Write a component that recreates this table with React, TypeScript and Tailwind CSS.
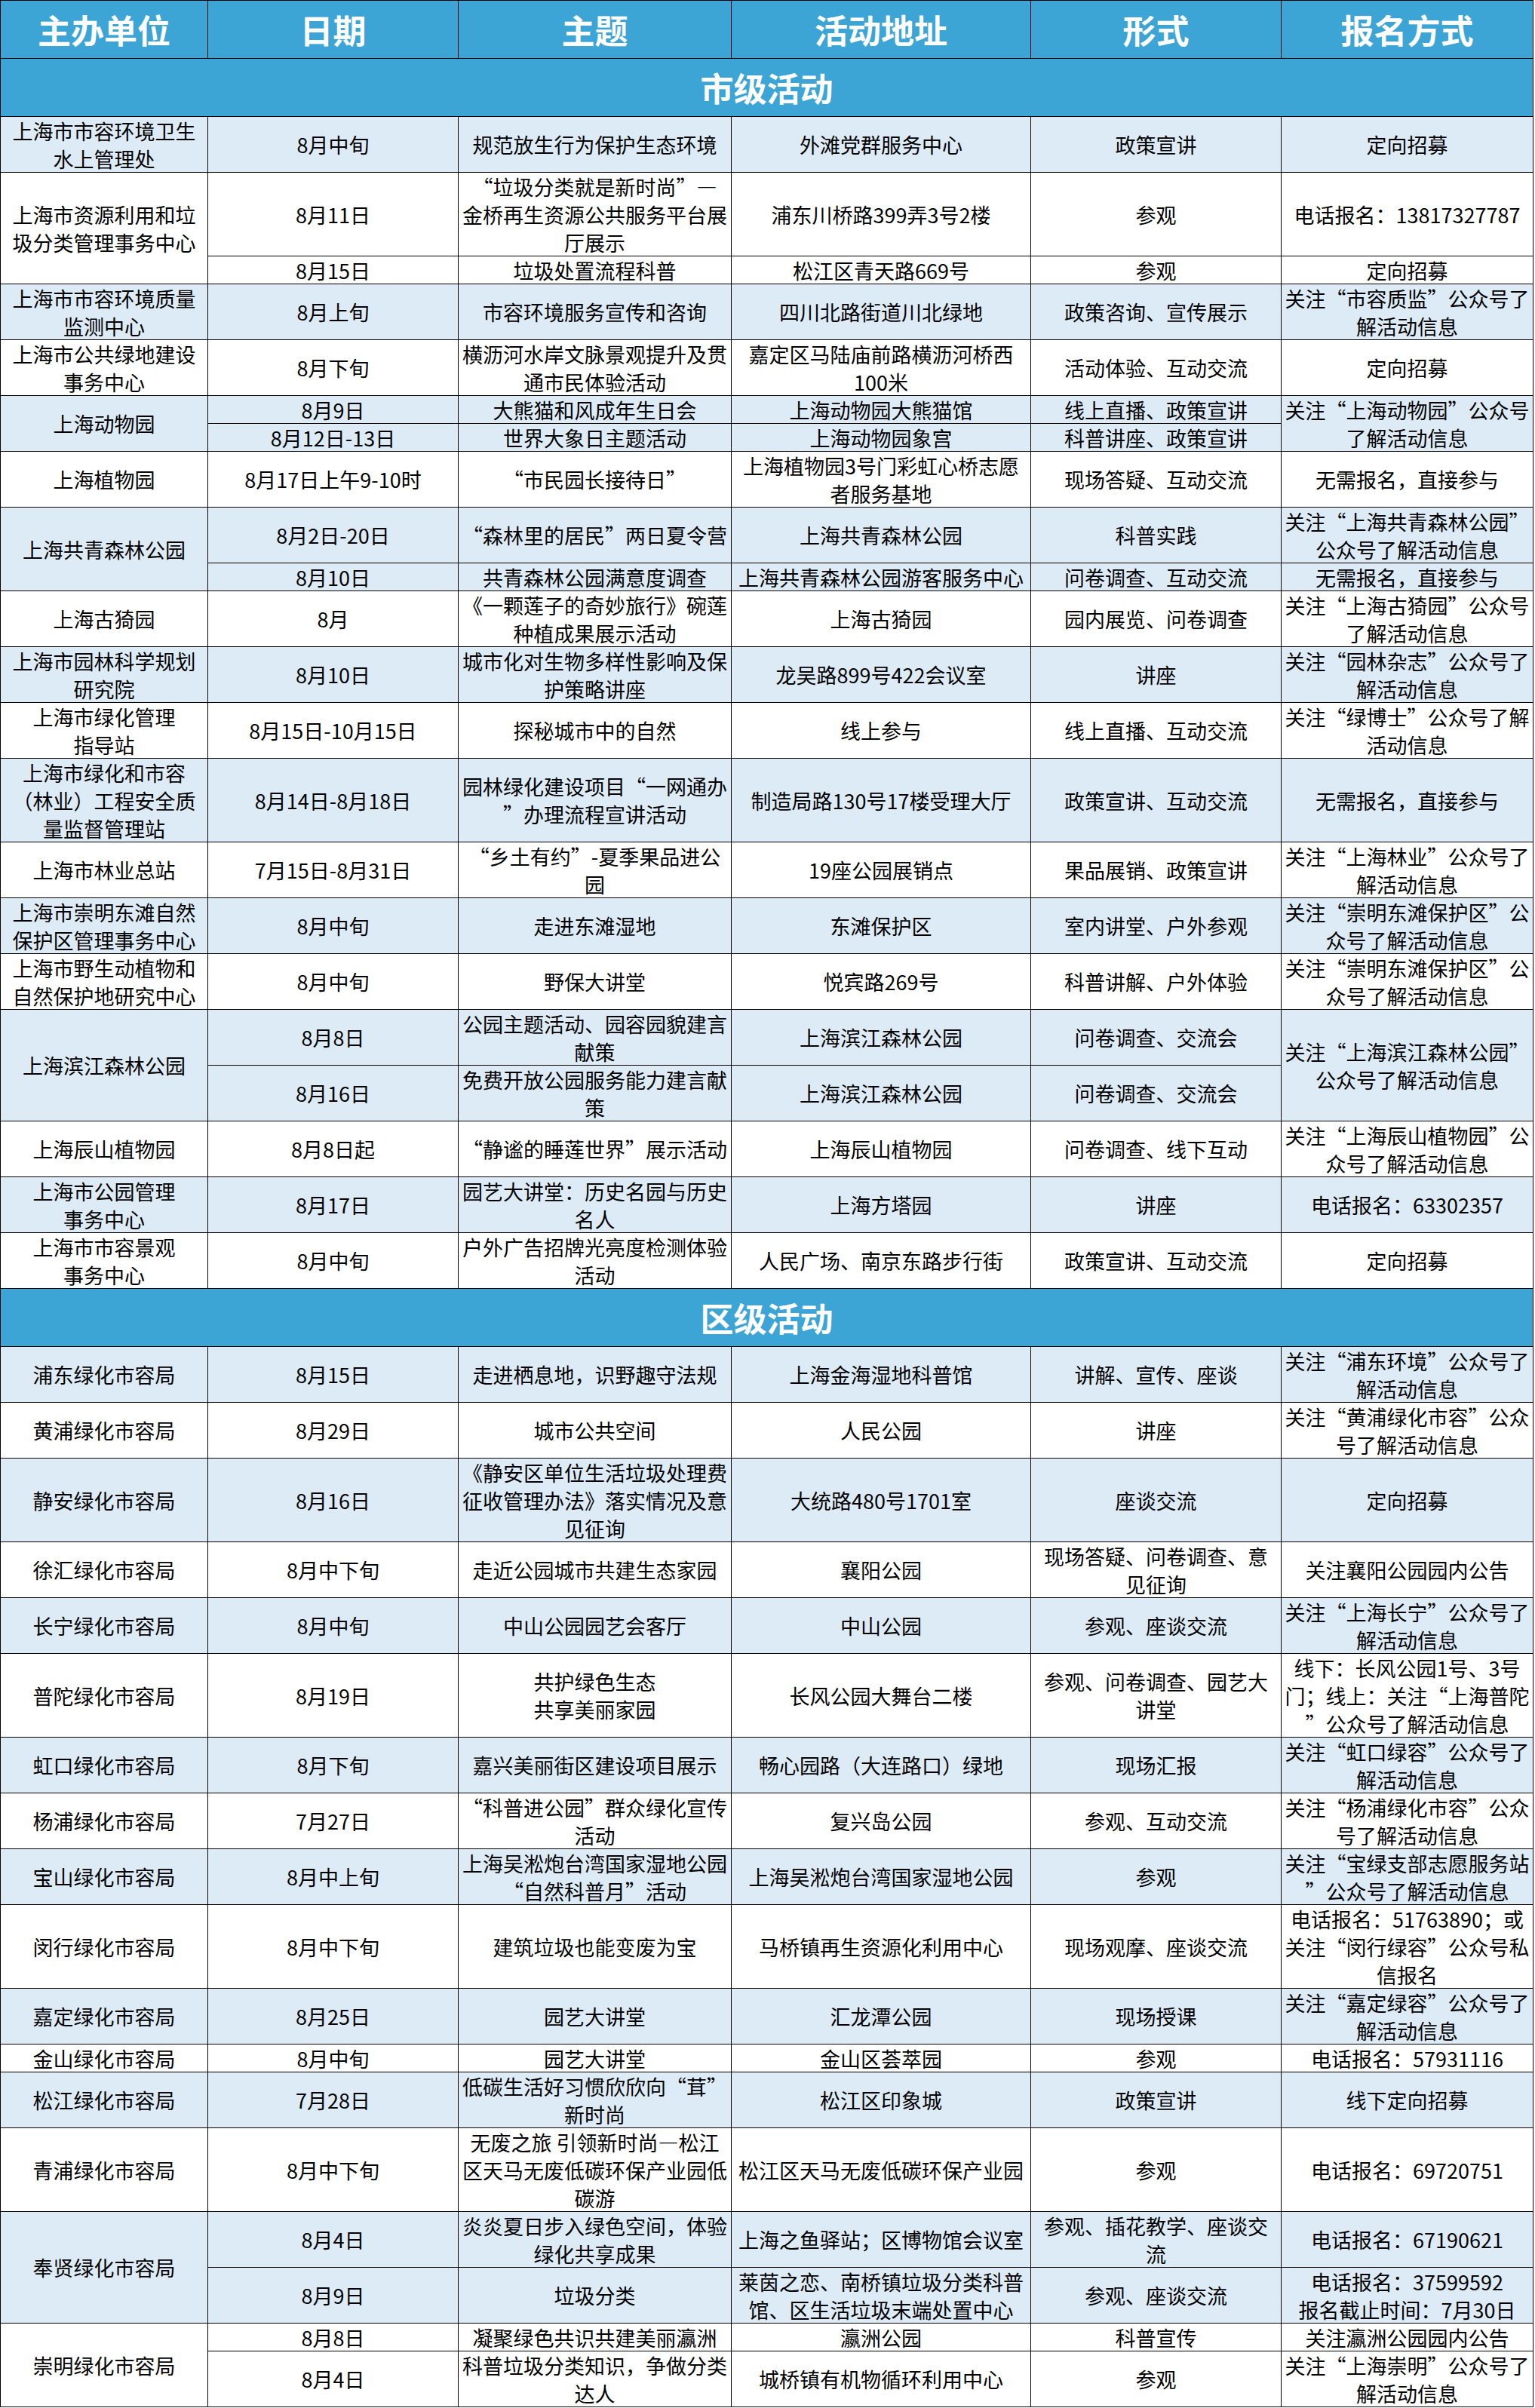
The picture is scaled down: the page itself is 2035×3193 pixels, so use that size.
import React from "react";

type Sub = { s: number; d: string; t: string; a: string; f: string; r?: string; rs?: number };
type Group = { unit: string; subs: Sub[] };

const SPAN: Record<number, string> = {
  1: "row-span-1",
  2: "row-span-2",
  3: "row-span-3",
  4: "row-span-4",
};

const city: Group[] = [
  { unit: "上海市市容环境卫生\n水上管理处", subs: [{ s: 2, d: "8月中旬", t: "规范放生行为保护生态环境", a: "外滩党群服务中心", f: "政策宣讲", r: "定向招募" }] },
  {
    unit: "上海市资源利用和垃\n圾分类管理事务中心",
    subs: [
      { s: 3, d: "8月11日", t: "“垃圾分类就是新时尚”—\n金桥再生资源公共服务平台展\n厅展示", a: "浦东川桥路399弄3号2楼", f: "参观", r: "电话报名：13817327787" },
      { s: 1, d: "8月15日", t: "垃圾处置流程科普", a: "松江区青天路669号", f: "参观", r: "定向招募" },
    ],
  },
  { unit: "上海市市容环境质量\n监测中心", subs: [{ s: 2, d: "8月上旬", t: "市容环境服务宣传和咨询", a: "四川北路街道川北绿地", f: "政策咨询、宣传展示", r: "关注“市容质监”公众号了\n解活动信息" }] },
  { unit: "上海市公共绿地建设\n事务中心", subs: [{ s: 2, d: "8月下旬", t: "横沥河水岸文脉景观提升及贯\n通市民体验活动", a: "嘉定区马陆庙前路横沥河桥西\n100米", f: "活动体验、互动交流", r: "定向招募" }] },
  {
    unit: "上海动物园",
    subs: [
      { s: 1, d: "8月9日", t: "大熊猫和风成年生日会", a: "上海动物园大熊猫馆", f: "线上直播、政策宣讲", r: "关注“上海动物园”公众号\n了解活动信息", rs: 2 },
      { s: 1, d: "8月12日-13日", t: "世界大象日主题活动", a: "上海动物园象宫", f: "科普讲座、政策宣讲" },
    ],
  },
  { unit: "上海植物园", subs: [{ s: 2, d: "8月17日上午9-10时", t: "“市民园长接待日”", a: "上海植物园3号门彩虹心桥志愿\n者服务基地", f: "现场答疑、互动交流", r: "无需报名，直接参与" }] },
  {
    unit: "上海共青森林公园",
    subs: [
      { s: 2, d: "8月2日-20日", t: "“森林里的居民”两日夏令营", a: "上海共青森林公园", f: "科普实践", r: "关注“上海共青森林公园”\n公众号了解活动信息" },
      { s: 1, d: "8月10日", t: "共青森林公园满意度调查", a: "上海共青森林公园游客服务中心", f: "问卷调查、互动交流", r: "无需报名，直接参与" },
    ],
  },
  { unit: "上海古猗园", subs: [{ s: 2, d: "8月", t: "《一颗莲子的奇妙旅行》碗莲\n种植成果展示活动", a: "上海古猗园", f: "园内展览、问卷调查", r: "关注“上海古猗园”公众号\n了解活动信息" }] },
  { unit: "上海市园林科学规划\n研究院", subs: [{ s: 2, d: "8月10日", t: "城市化对生物多样性影响及保\n护策略讲座", a: "龙吴路899号422会议室", f: "讲座", r: "关注“园林杂志”公众号了\n解活动信息" }] },
  { unit: "上海市绿化管理\n指导站", subs: [{ s: 2, d: "8月15日-10月15日", t: "探秘城市中的自然", a: "线上参与", f: "线上直播、互动交流", r: "关注“绿博士”公众号了解\n活动信息" }] },
  { unit: "上海市绿化和市容\n（林业）工程安全质\n量监督管理站", subs: [{ s: 3, d: "8月14日-8月18日", t: "园林绿化建设项目“一网通办\n”办理流程宣讲活动", a: "制造局路130号17楼受理大厅", f: "政策宣讲、互动交流", r: "无需报名，直接参与" }] },
  { unit: "上海市林业总站", subs: [{ s: 2, d: "7月15日-8月31日", t: "“乡土有约”-夏季果品进公\n园", a: "19座公园展销点", f: "果品展销、政策宣讲", r: "关注“上海林业”公众号了\n解活动信息" }] },
  { unit: "上海市崇明东滩自然\n保护区管理事务中心", subs: [{ s: 2, d: "8月中旬", t: "走进东滩湿地", a: "东滩保护区", f: "室内讲堂、户外参观", r: "关注“崇明东滩保护区”公\n众号了解活动信息" }] },
  { unit: "上海市野生动植物和\n自然保护地研究中心", subs: [{ s: 2, d: "8月中旬", t: "野保大讲堂", a: "悦宾路269号", f: "科普讲解、户外体验", r: "关注“崇明东滩保护区”公\n众号了解活动信息" }] },
  {
    unit: "上海滨江森林公园",
    subs: [
      { s: 2, d: "8月8日", t: "公园主题活动、园容园貌建言\n献策", a: "上海滨江森林公园", f: "问卷调查、交流会", r: "关注“上海滨江森林公园”\n公众号了解活动信息", rs: 4 },
      { s: 2, d: "8月16日", t: "免费开放公园服务能力建言献\n策", a: "上海滨江森林公园", f: "问卷调查、交流会" },
    ],
  },
  { unit: "上海辰山植物园", subs: [{ s: 2, d: "8月8日起", t: "“静谧的睡莲世界”展示活动", a: "上海辰山植物园", f: "问卷调查、线下互动", r: "关注“上海辰山植物园”公\n众号了解活动信息" }] },
  { unit: "上海市公园管理\n事务中心", subs: [{ s: 2, d: "8月17日", t: "园艺大讲堂：历史名园与历史\n名人", a: "上海方塔园", f: "讲座", r: "电话报名：63302357" }] },
  { unit: "上海市市容景观\n事务中心", subs: [{ s: 2, d: "8月中旬", t: "户外广告招牌光亮度检测体验\n活动", a: "人民广场、南京东路步行街", f: "政策宣讲、互动交流", r: "定向招募" }] },
];

const dist: Group[] = [
  { unit: "浦东绿化市容局", subs: [{ s: 2, d: "8月15日", t: "走进栖息地，识野趣守法规", a: "上海金海湿地科普馆", f: "讲解、宣传、座谈", r: "关注“浦东环境”公众号了\n解活动信息" }] },
  { unit: "黄浦绿化市容局", subs: [{ s: 2, d: "8月29日", t: "城市公共空间", a: "人民公园", f: "讲座", r: "关注“黄浦绿化市容”公众\n号了解活动信息" }] },
  { unit: "静安绿化市容局", subs: [{ s: 3, d: "8月16日", t: "《静安区单位生活垃圾处理费\n征收管理办法》落实情况及意\n见征询", a: "大统路480号1701室", f: "座谈交流", r: "定向招募" }] },
  { unit: "徐汇绿化市容局", subs: [{ s: 2, d: "8月中下旬", t: "走近公园城市共建生态家园", a: "襄阳公园", f: "现场答疑、问卷调查、意\n见征询", r: "关注襄阳公园园内公告" }] },
  { unit: "长宁绿化市容局", subs: [{ s: 2, d: "8月中旬", t: "中山公园园艺会客厅", a: "中山公园", f: "参观、座谈交流", r: "关注“上海长宁”公众号了\n解活动信息" }] },
  { unit: "普陀绿化市容局", subs: [{ s: 3, d: "8月19日", t: "共护绿色生态\n共享美丽家园", a: "长风公园大舞台二楼", f: "参观、问卷调查、园艺大\n讲堂", r: "线下：长风公园1号、3号\n门；线上：关注“上海普陀\n”公众号了解活动信息" }] },
  { unit: "虹口绿化市容局", subs: [{ s: 2, d: "8月下旬", t: "嘉兴美丽街区建设项目展示", a: "畅心园路（大连路口）绿地", f: "现场汇报", r: "关注“虹口绿容”公众号了\n解活动信息" }] },
  { unit: "杨浦绿化市容局", subs: [{ s: 2, d: "7月27日", t: "“科普进公园”群众绿化宣传\n活动", a: "复兴岛公园", f: "参观、互动交流", r: "关注“杨浦绿化市容”公众\n号了解活动信息" }] },
  { unit: "宝山绿化市容局", subs: [{ s: 2, d: "8月中上旬", t: "上海吴淞炮台湾国家湿地公园\n“自然科普月”活动", a: "上海吴淞炮台湾国家湿地公园", f: "参观", r: "关注“宝绿支部志愿服务站\n”公众号了解活动信息" }] },
  { unit: "闵行绿化市容局", subs: [{ s: 3, d: "8月中下旬", t: "建筑垃圾也能变废为宝", a: "马桥镇再生资源化利用中心", f: "现场观摩、座谈交流", r: "电话报名：51763890；或\n关注“闵行绿容”公众号私\n信报名" }] },
  { unit: "嘉定绿化市容局", subs: [{ s: 2, d: "8月25日", t: "园艺大讲堂", a: "汇龙潭公园", f: "现场授课", r: "关注“嘉定绿容”公众号了\n解活动信息" }] },
  { unit: "金山绿化市容局", subs: [{ s: 1, d: "8月中旬", t: "园艺大讲堂", a: "金山区荟萃园", f: "参观", r: "电话报名：57931116" }] },
  { unit: "松江绿化市容局", subs: [{ s: 2, d: "7月28日", t: "低碳生活好习惯欣欣向“茸”\n新时尚", a: "松江区印象城", f: "政策宣讲", r: "线下定向招募" }] },
  { unit: "青浦绿化市容局", subs: [{ s: 3, d: "8月中下旬", t: "无废之旅 引领新时尚—松江\n区天马无废低碳环保产业园低\n碳游", a: "松江区天马无废低碳环保产业园", f: "参观", r: "电话报名：69720751" }] },
  {
    unit: "奉贤绿化市容局",
    subs: [
      { s: 2, d: "8月4日", t: "炎炎夏日步入绿色空间，体验\n绿化共享成果", a: "上海之鱼驿站；区博物馆会议室", f: "参观、插花教学、座谈交\n流", r: "电话报名：67190621" },
      { s: 2, d: "8月9日", t: "垃圾分类", a: "莱茵之恋、南桥镇垃圾分类科普\n馆、区生活垃圾末端处置中心", f: "参观、座谈交流", r: "电话报名：37599592\n报名截止时间：7月30日" },
    ],
  },
  {
    unit: "崇明绿化市容局",
    subs: [
      { s: 1, d: "8月8日", t: "凝聚绿色共识共建美丽瀛洲", a: "瀛洲公园", f: "科普宣传", r: "关注瀛洲公园园内公告" },
      { s: 2, d: "8月4日", t: "科普垃圾分类知识，争做分类\n达人", a: "城桥镇有机物循环利用中心", f: "参观", r: "关注“上海崇明”公众号了\n解活动信息" },
    ],
  },
];

function Cell({ t, span, light }: { t: string; span: number; light: boolean }) {
  return (
    <div
      className={`${SPAN[span]} ${
        light ? "bg-[#ddebf7]" : "bg-white"
      } flex items-center justify-center border-r border-b border-black text-center whitespace-pre text-[27px] leading-[37px] text-black`}
    >
      {t}
    </div>
  );
}

function Section({ title }: { title: string }) {
  return (
    <div className="h-[77px] flex items-center justify-center bg-[#3ca5d6] border-r border-b border-black text-white font-bold text-[44px]">
      {title}
    </div>
  );
}

function Body({ groups }: { groups: Group[] }) {
  const cells: React.ReactNode[] = [];
  groups.forEach((g, gi) => {
    const light = gi % 2 === 0;
    const total = g.subs.reduce((n, s) => n + s.s, 0);
    cells.push(<Cell key={`${gi}-u`} t={g.unit} span={total} light={light} />);
    g.subs.forEach((s, si) => {
      cells.push(<Cell key={`${gi}-${si}-d`} t={s.d} span={s.s} light={light} />);
      cells.push(<Cell key={`${gi}-${si}-t`} t={s.t} span={s.s} light={light} />);
      cells.push(<Cell key={`${gi}-${si}-a`} t={s.a} span={s.s} light={light} />);
      cells.push(<Cell key={`${gi}-${si}-f`} t={s.f} span={s.s} light={light} />);
      if (s.r !== undefined) {
        cells.push(<Cell key={`${gi}-${si}-r`} t={s.r} span={s.rs ?? s.s} light={light} />);
      }
    });
  });
  return (
    <div className="grid grid-cols-[275px_332px_362px_397px_332px_334px] auto-rows-[37px]">{cells}</div>
  );
}

const headers = ["主办单位", "日期", "主题", "活动地址", "形式", "报名方式"];

export default function App() {
  return (
    <div
      lang="zh-CN"
      className="bg-white min-h-[3193px] font-['Noto_Sans_CJK_SC','Noto_Sans',sans-serif]"
    >
      <div className="w-[2033px] border-l border-t border-black">
        <div className="grid grid-cols-[275px_332px_362px_397px_332px_334px] h-[77px]">
          {headers.map((h) => (
            <div
              key={h}
              className="flex items-center justify-center bg-[#3ca5d6] border-r border-b border-black text-white font-bold text-[44px]"
            >
              {h}
            </div>
          ))}
        </div>
        <Section title="市级活动" />
        <Body groups={city} />
        <Section title="区级活动" />
        <Body groups={dist} />
      </div>
    </div>
  );
}
